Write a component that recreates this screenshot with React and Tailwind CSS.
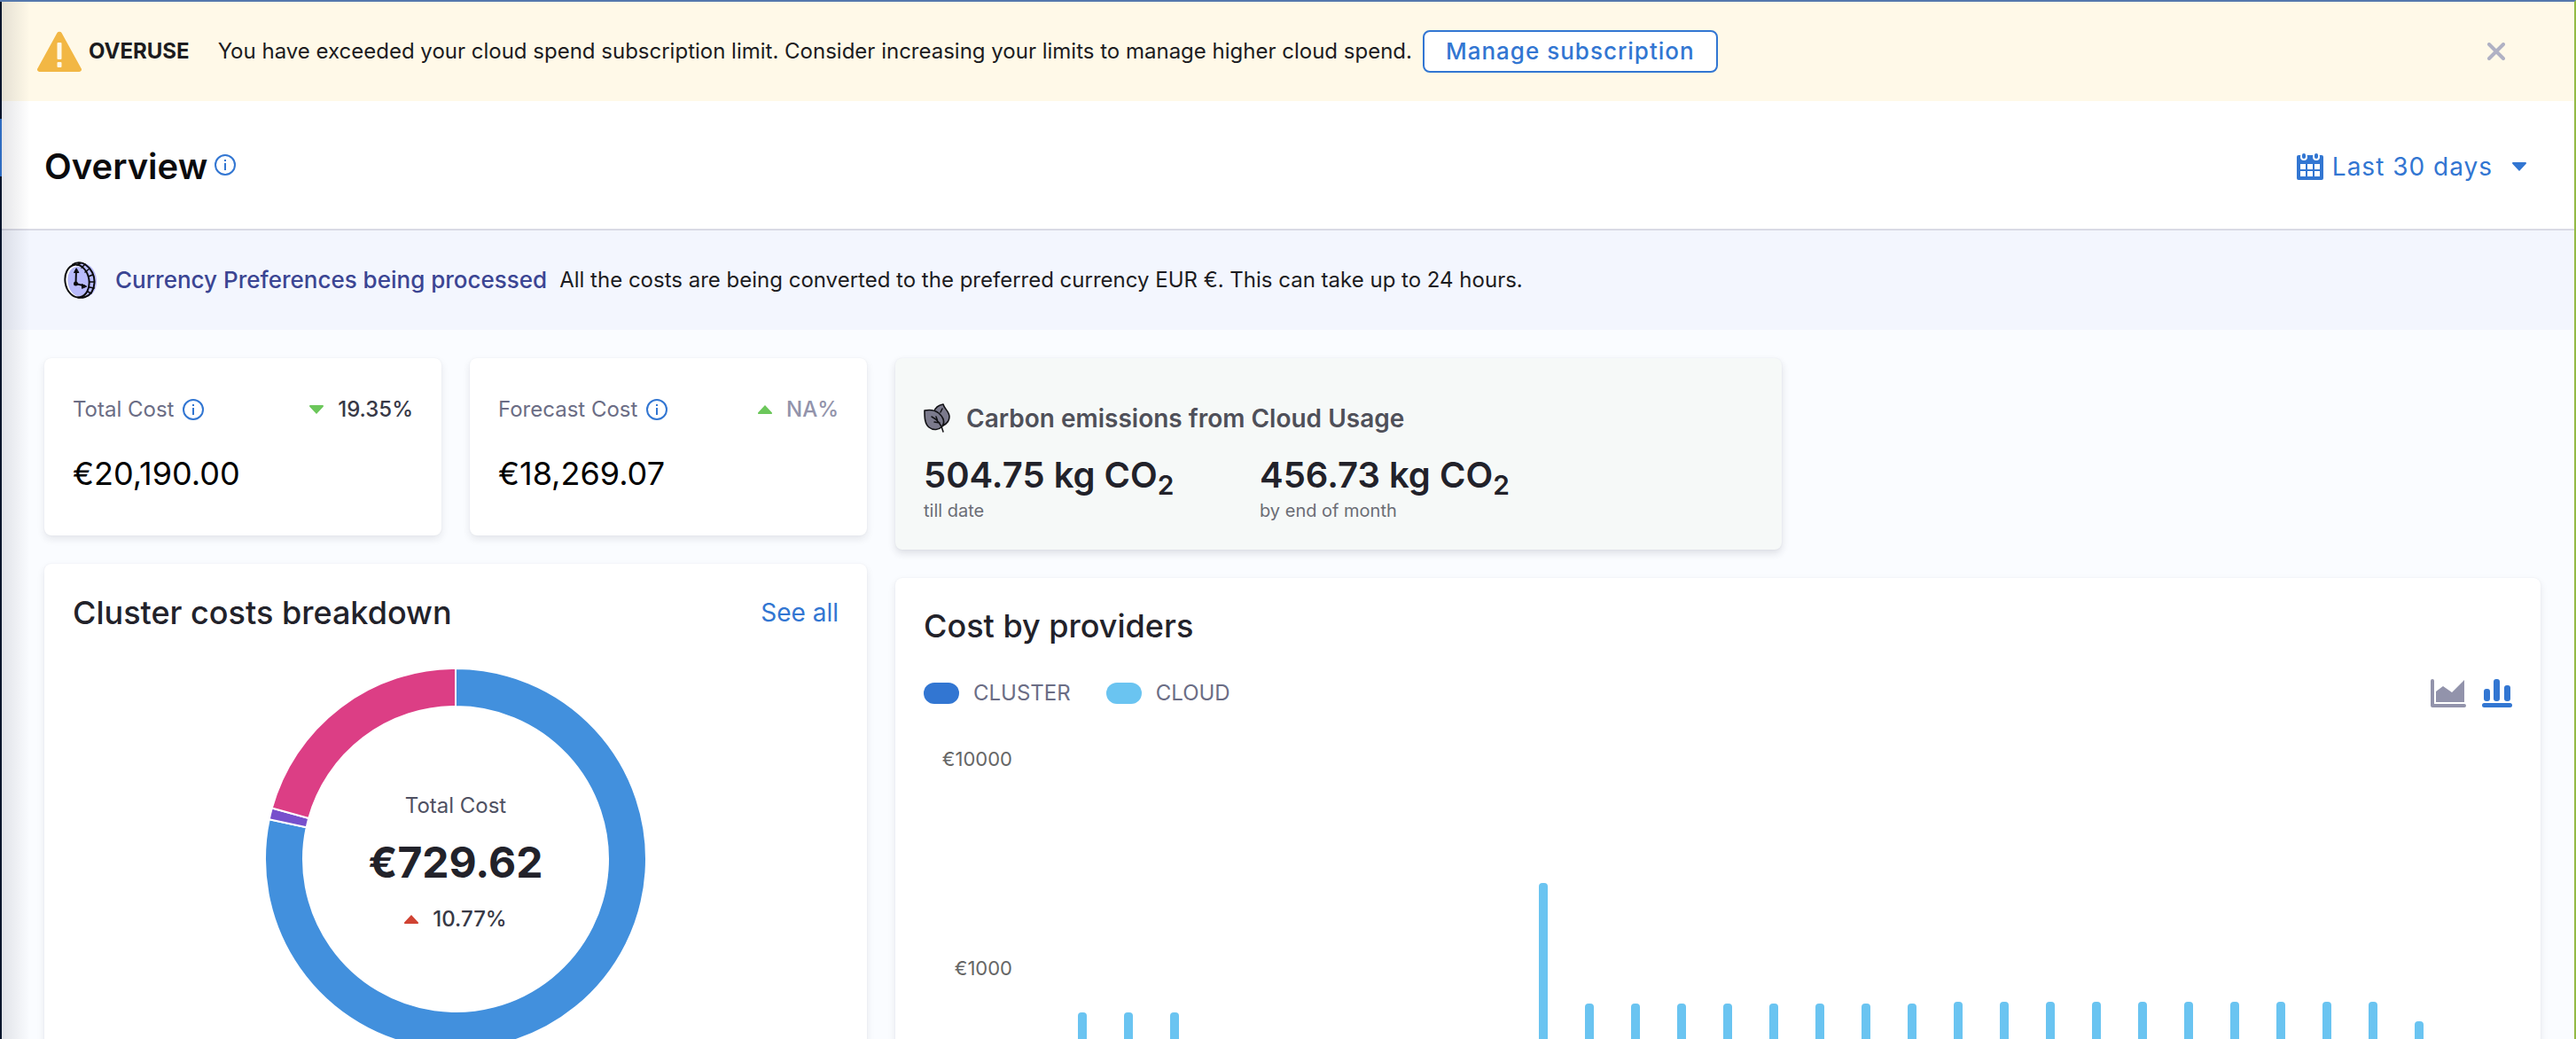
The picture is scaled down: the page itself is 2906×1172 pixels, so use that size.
const INFO = "#3276d2";

function InfoIcon() {
  return (
    <svg viewBox="0 0 24 24" className="size-6 shrink-0" fill="none" aria-hidden="true">
      <circle cx="12" cy="12" r="11" stroke={INFO} strokeWidth="2" />
      <rect x="11" y="10" width="2" height="8" fill={INFO} />
      <rect x="11" y="6" width="2" height="2" fill={INFO} />
    </svg>
  );
}

function WarningIcon() {
  return (
    <svg viewBox="0 0 50 46" className="h-[46px] w-[50px] shrink-0" aria-hidden="true">
      <path d="M22.5 2a3 3 0 0 1 5 0l22 40a2.500 2.500 0 0 1-2 4h-45a2.500 2.500 0 0 1-2-4z" fill="#f2b744" />
      <rect x="22.500" y="13" width="5" height="19" rx="1" fill="#fff9e8" />
      <rect x="22.500" y="35" width="5" height="6" rx="1" fill="#fff9e8" />
    </svg>
  );
}

function ClockIcon() {
  return (
    <svg viewBox="0 0 38 42" className="h-[42px] w-[38px] shrink-0" fill="none" stroke="#0b0b0d" strokeWidth="2" strokeLinecap="round" aria-hidden="true">
      <path d="M18 2c11-2 19 9 19 20s-5 16-11 18z" fill="#b9bbfb" stroke="none" />
      <ellipse cx="15" cy="22" rx="13.500" ry="18.500" transform="rotate(-9 15 22)" fill="#fff" stroke="none" />
      <ellipse cx="16.500" cy="22.500" rx="12" ry="17" transform="rotate(-9 16.500 22.500)" fill="#b9bbfb" stroke="none" />
      <ellipse cx="15" cy="22" rx="13.500" ry="18.500" transform="rotate(-9 15 22)" />
      <path d="M10 3.500C13 1 20 0 25 4c6 4 10 12 9.500 20S30 38 24 40c-3 1-6 1-8 .5" />
      <path d="M15 4l4-2.500M20 7l4-4M24 12l5-4M27.500 17l5-2M29 23l5 0M29 29l5 1M27 34l4 2" strokeWidth="1.600" />
      <path d="M13.500 25L14 9M13.500 25l10 2.500" />
      <path d="M14 8l-2.500 4.500h5zM25.500 28l-5-2.500 0 4.500z" fill="#0b0b0d" strokeWidth="1" />
      <circle cx="13.500" cy="25" r="1.500" fill="#0b0b0d" />
    </svg>
  );
}

function LeafIcon() {
  return (
    <svg viewBox="0 0 32 34" className="h-[34px] w-8 shrink-0" fill="#7b7a8c" stroke="#111114" strokeWidth="1.600" strokeLinejoin="round" strokeLinecap="round" aria-hidden="true">
      <path d="M12 9c1-4 5-7 10-8 1 5 7 8 7 14 0 5-3 8-7 10z" />
      <path d="M1 8c5-1 11-1 16 3 6 5 7 11 4 15-4 4-10 5-15 1C1 23 1 15 1 8z" />
      <path d="M9 15c6 3 11 8 13 17M14 15l1.500 4M12 21l6 1M21 6l-2 4" fill="none" strokeWidth="1.500" />
    </svg>
  );
}

function CalendarIcon() {
  return (
    <svg viewBox="0 0 30 30" className="size-[30px] shrink-0" aria-hidden="true">
      <rect x="0" y="2" width="30" height="28" rx="2" fill={INFO} />
      <rect x="4" y="0" width="8" height="8" rx="4" fill="#fff" />
      <rect x="18" y="0" width="8" height="8" rx="4" fill="#fff" />
      <rect x="6" y="0" width="4" height="6" rx="2" fill={INFO} />
      <rect x="20" y="0" width="4" height="6" rx="2" fill={INFO} />
      <path d="M4 12h6v6H4zM12 12h6v6h-6zM20 12h6v6h-6zM4 20h6v6H4zM12 20h6v6h-6zM20 20h6v6h-6z" fill="#fff" />
    </svg>
  );
}

function Triangle({ color, down }) {
  return (
    <svg viewBox="0 0 16 10" className="h-[10px] w-4 shrink-0" aria-hidden="true">
      <path d={down ? "M1 0h14a1 1 0 0 1 .7 1.700L8 10 .3 1.700A1 1 0 0 1 1 0z" : "M1 10h14a1 1 0 0 0 .7-1.700L8 0 .3 8.300A1 1 0 0 0 1 10z"} fill={color} />
    </svg>
  );
}

function StatCard({ label, value, change, down, muted }) {
  return (
    <section className="flex h-[200px] flex-1 flex-col justify-between rounded-lg bg-white px-8 pt-[42px] pb-[50px] shadow-[0_4px_8px_rgba(40,41,61,0.1),0_0_2px_rgba(40,41,61,0.06)]">
      <div className="flex items-center justify-between">
        <div className="flex items-center gap-[10px] text-2xl text-[#6b6d85]">
          {label}
          <InfoIcon />
        </div>
        <div className={muted ? "flex items-center gap-4 text-2xl font-medium text-[#9293ab]" : "flex items-center gap-4 text-2xl font-medium text-[#383946]"}>
          <Triangle color="#6cc75b" down={down} />
          {change}
        </div>
      </div>
      <p className="text-4xl text-black">{value}</p>
    </section>
  );
}

function point(radius, angle) {
  const a = ((angle - 90) * Math.PI) / 180;
  return `${214 + radius * Math.cos(a)} ${214 + radius * Math.sin(a)}`;
}

function arc(from, to) {
  const large = to - from > 180 ? 1 : 0;
  return `M${point(215, from)}A215 215 0 ${large} 1 ${point(215, to)}L${point(172, to)}A172 172 0 ${large} 0 ${point(172, from)}Z`;
}

function Donut() {
  return (
    <div className="relative mx-auto size-[428px]">
      <svg viewBox="0 0 428 428" className="size-full overflow-visible" stroke="#fff" strokeWidth="2" aria-hidden="true">
        <path d={arc(0, 282)} fill="#4290dd" />
        <path d={arc(282, 285.500)} fill="#7750cc" />
        <path d={arc(285.500, 360)} fill="#dc3e85" />
      </svg>
      <div className="absolute inset-0 flex flex-col items-center justify-center gap-6 pt-2">
        <span className="text-2xl text-[#4f5162]">Total Cost</span>
        <span className="text-5xl font-bold text-[#22222a]">€729.62</span>
        <span className="flex items-center gap-4 text-2xl font-medium text-[#383946]">
          <Triangle color="#d04333" />
          10.77%
        </span>
      </div>
    </div>
  );
}

function Emission({ amount, note }) {
  return (
    <div className="w-[379px]">
      <p className="text-[40px] leading-[52px] font-semibold text-[#22222a]">
        {amount} kg CO<sub className="text-[30px]">2</sub>
      </p>
      <p className="text-xl text-[#6b6d75]">{note}</p>
    </div>
  );
}

const BARS = [178, 178, 178, 0, 0, 0, 0, 0, 0, 0, 324, 188, 188, 188, 188, 188, 188, 188, 188, 190, 190, 190, 190, 190, 190, 190, 190, 190, 190, 168];

function Chart() {
  return (
    <div className="flex h-[480px] pl-5">
      <div className="flex w-20 flex-col gap-[204px] text-right text-[22px] leading-8 text-[#666]">
        <span>€10000</span>
        <span>€1000</span>
      </div>
      <div className="mr-[100px] ml-[74px] flex flex-1 items-end justify-between">
        {BARS.map((h, i) => (
          <div key={i} className="w-[10px] rounded-t-[4px] bg-[#6ac4f1]" style={{ height: h }} />
        ))}
      </div>
    </div>
  );
}

function Legend({ swatch, label }) {
  return (
    <span className="flex items-center gap-4 text-2xl text-[#6b6d85]">
      <span className={swatch} />
      {label}
    </span>
  );
}

export default function App() {
  return (
    <div className="flex h-screen overflow-hidden border-t-2 border-r-2 border-t-[#5578ad] border-r-[#93ba45] bg-[#fafcff] font-['Inter',sans-serif]">
      <aside className="flex w-[2px] shrink-0 flex-col bg-[#07152b] pt-[132px]">
        <div className="h-[65px] bg-[#2f6cc0]" />
      </aside>
      <div className="relative flex min-w-0 flex-1 flex-col">
        <div className="pointer-events-none absolute inset-y-0 left-0 w-8 bg-linear-to-r from-[#28293d]/12 to-[#28293d]/0" />
        <div className="flex h-[112px] shrink-0 items-center bg-[#fff9e8] pr-[78px] pl-10 text-2xl text-[#1c1c1f]">
          <WarningIcon />
          <strong className="ml-2 font-bold">OVERUSE</strong>
          <p className="ml-8">You have exceeded your cloud spend subscription limit. Consider increasing your limits to manage higher cloud spend.</p>
          <button className="ml-3 h-12 rounded-lg border-2 border-[#3276d2] bg-white px-6 text-[26px] font-medium tracking-[1px] text-[#3276d2]">Manage subscription</button>
          <button className="ml-auto" aria-label="Dismiss">
            <svg viewBox="0 0 20 20" className="size-5" stroke="#b0b1c4" strokeWidth="4" strokeLinecap="round" aria-hidden="true">
              <path d="M2 2l16 16M18 2L2 18" />
            </svg>
          </button>
        </div>
        <header className="flex h-[146px] shrink-0 items-center justify-between border-b-2 border-[#d9dae5] bg-white pt-1 pr-[54px] pl-12">
          <div className="flex items-center gap-2">
            <h1 className="text-[40px] font-semibold text-[#0b0b0d]">Overview</h1>
            <span className="pb-1"><InfoIcon /></span>
          </div>
          <button className="flex items-center gap-[10px] text-[28px] tracking-[1px] text-[#3276d2]">
            <CalendarIcon />
            Last 30 days
            <span className="ml-3"><Triangle color={INFO} down /></span>
          </button>
        </header>
        <div className="flex h-[112px] shrink-0 items-center bg-[#f3f6fe] pl-[70px] text-2xl text-[#1c1c1f]">
          <ClockIcon />
          <strong className="ml-5 text-[26px] font-medium text-[#3b4593]">Currency Preferences being processed</strong>
          <p className="ml-[14px]">All the costs are being converted to the preferred currency EUR €. This can take up to 24 hours.</p>
        </div>
        <main className="flex items-start gap-8 pt-8 pr-[38px] pl-12">
          <div className="flex w-[928px] shrink-0 flex-col gap-8">
            <div className="flex gap-8">
              <StatCard label="Total Cost" value="€20,190.00" change="19.35%" down />
              <StatCard label="Forecast Cost" value="€18,269.07" change="NA%" muted />
            </div>
            <section className="rounded-lg bg-white px-8 pt-[34px] pb-8 shadow-[0_4px_8px_rgba(40,41,61,0.1),0_0_2px_rgba(40,41,61,0.06)]">
              <div className="mb-[43px] flex items-center justify-between">
                <h2 className="text-4xl font-medium text-[#22222a]">Cluster costs breakdown</h2>
                <a href="#clusters" className="text-[28px] text-[#3276d2]">See all</a>
              </div>
              <Donut />
            </section>
          </div>
          <div className="flex min-w-0 flex-1 flex-col gap-8">
            <section className="h-[216px] w-[1000px] rounded-lg bg-[#f6f9f8] px-8 pt-[50px] shadow-[0_4px_8px_rgba(40,41,61,0.14),0_0_2px_rgba(40,41,61,0.06)]">
              <h2 className="flex items-center gap-4 text-[28px] leading-9 font-semibold text-[#4f5059]">
                <LeafIcon />
                Carbon emissions from Cloud Usage
              </h2>
              <div className="mt-5 flex">
                <Emission amount="504.75" note="till date" />
                <Emission amount="456.73" note="by end of month" />
              </div>
            </section>
            <section className="rounded-lg bg-white px-8 pt-[34px] shadow-[0_4px_8px_rgba(40,41,61,0.1),0_0_2px_rgba(40,41,61,0.06)]">
              <h2 className="text-4xl font-medium text-[#22222a]">Cost by providers</h2>
              <div className="mt-10 mb-[42px] flex items-center gap-10">
                <Legend swatch="h-6 w-10 rounded-xl bg-[#3276d2]" label="CLUSTER" />
                <Legend swatch="h-6 w-10 rounded-xl bg-[#6ac4f1]" label="CLOUD" />
                <div className="ml-auto flex gap-[18px]">
                  <button aria-label="Area chart">
                    <svg viewBox="0 0 40 32" className="h-8 w-10" fill="#9293ab" aria-hidden="true">
                      <path d="M0 2a2 2 0 0 1 4 0v26h34a2 2 0 0 1 0 4H2a2 2 0 0 1-2-2z" />
                      <path d="M6 14l8-6 10 7L38 1v25H6z" />
                    </svg>
                  </button>
                  <button aria-label="Bar chart">
                    <svg viewBox="0 0 34 32" className="h-8 w-[34px]" fill={INFO} aria-hidden="true">
                      <rect x="2" y="11" width="7" height="14" rx="3" />
                      <rect x="13" y="0" width="7" height="25" rx="3" />
                      <rect x="25" y="7" width="7" height="18" rx="3" />
                      <rect x="0" y="27" width="34" height="5" rx="2.500" />
                    </svg>
                  </button>
                </div>
              </div>
              <Chart />
            </section>
          </div>
        </main>
      </div>
    </div>
  );
}
